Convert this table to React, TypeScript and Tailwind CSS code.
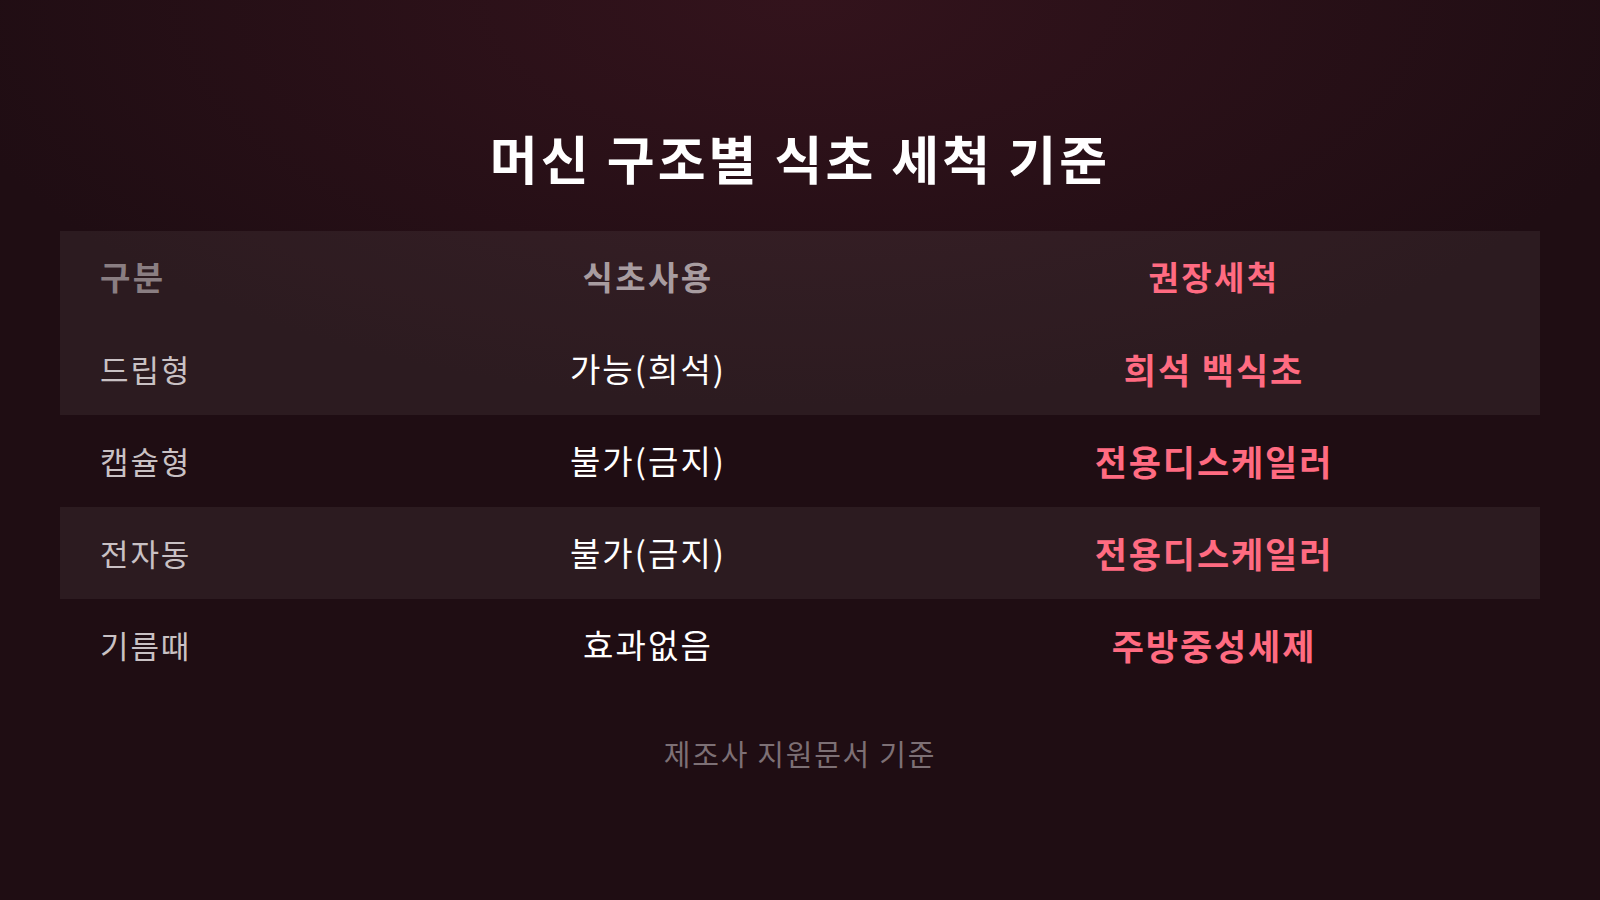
import React from "react";

interface Row {
  type: string;
  vinegar: string;
  clean: string;
}

const rows: Row[] = [
  { type: "드립형", vinegar: "가능(희석)", clean: "희석 백식초" },
  { type: "캡슐형", vinegar: "불가(금지)", clean: "전용디스케일러" },
  { type: "전자동", vinegar: "불가(금지)", clean: "전용디스케일러" },
  { type: "기름때", vinegar: "효과없음", clean: "주방중성세제" },
];

const App: React.FC = () => {
  return (
    <div
      className="w-[1600px] h-[900px] overflow-hidden flex flex-col items-center bg-[#1f0d13] bg-[radial-gradient(ellipse_55%_45%_at_50%_0%,#33131c_0%,#1f0d13_100%)]"
      style={{ fontFamily: '"Noto Sans CJK KR", "Noto Sans", sans-serif' }}
    >
      <h1 className="mt-[128px] text-[52px] leading-[60px] tracking-[0.06em] font-bold text-white">
        머신 구조별 식초 세척 기준
      </h1>

      <div className="mt-[43px] w-[1480px]">
        <div className="grid grid-cols-[348px_480px_1fr] h-[92px] items-center bg-white/[0.06] text-[33px] tracking-[0.074em] font-bold">
          <div className="pl-[40px] text-[#8a7e82]">구분</div>
          <div className="text-center text-[#a89ca0]">식초사용</div>
          <div className="text-center text-[#ff6b81]">권장세척</div>
        </div>
        {rows.map((row, i) => (
          <div
            key={i}
            className={`grid grid-cols-[348px_480px_1fr] h-[92px] items-center ${i % 2 === 0 ? "bg-white/[0.06]" : ""}`}
          >
            <div className="pl-[40px] text-[31px] tracking-[0.06em] text-[#c9c1c4]">{row.type}</div>
            <div className="text-center text-[33px] tracking-[0.063em] text-white">{row.vinegar}</div>
            <div className="text-center text-[35px] tracking-[0.054em] font-bold text-[#ff6b81]">{row.clean}</div>
          </div>
        ))}
      </div>

      <p className="mt-[41px] text-[29px] tracking-[0.06em] text-[#7d7075]">제조사 지원문서 기준</p>
    </div>
  );
};

export default App;
